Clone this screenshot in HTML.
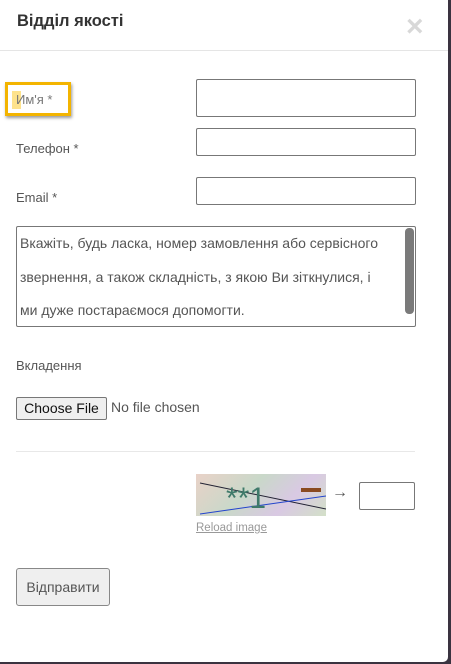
<!DOCTYPE html>
<html><head><meta charset="utf-8"><style>
html,body{margin:0;padding:0;width:451px;height:664px;overflow:hidden;background:#3a3340;font-family:"Liberation Sans","DejaVu Sans",sans-serif;}
.m{position:absolute;left:0;top:0;width:448px;height:662px;background:#fff;border-radius:0 0 5px 0;}
.t{position:absolute;left:17px;top:12px;font-size:16.5px;font-weight:bold;color:#333;}
.x{position:absolute;left:406px;top:9px;font-size:30px;color:#d8d8d8;font-weight:bold;line-height:36px;}
.hr1{position:absolute;left:0;top:50px;width:448px;height:1px;background:#e5e5e5;}
.l{position:absolute;left:16px;font-size:13px;color:#555;}
.in{position:absolute;left:196px;width:218px;border:1px solid #777;border-radius:2px;background:#fff;}
.hl{position:absolute;left:5px;top:82px;width:66px;height:34px;border:3px solid #f3b400;box-sizing:border-box;box-shadow:1px 2px 3px rgba(0,0,0,.4);}
.ta{position:absolute;left:16px;top:226px;width:398px;height:99px;border:1px solid #777;border-radius:2px;font-size:14px;color:#555;line-height:33.5px;}
.tx{padding:0 0 0 3px;width:385px;}
.sb{position:absolute;right:1px;top:1px;width:9px;height:86px;background:#7a7a7a;border-radius:4px;}
</style></head><body>
<div class="m">
<div class="t">Відділ якості</div>
<div class="x">×</div>
<div class="hr1"></div>
<div class="hl"></div>
<div style="position:absolute;left:12px;top:91px;width:9px;height:18px;background:#fde28c"></div>
<div class="l" style="top:92px;color:#777">Им'я *</div>
<div class="in" style="top:79px;height:36px"></div>
<div class="l" style="top:141px">Телефон *</div>
<div class="in" style="top:128px;height:26px"></div>
<div class="l" style="top:190px">Email *</div>
<div class="in" style="top:177px;height:26px"></div>
<div class="ta"><div class="tx">Вкажіть, будь ласка, номер замовлення або сервісного<br>звернення, а також складність, з якою Ви зіткнулися, і<br>ми дуже постараємося допомогти.</div><div class="sb"></div></div>
<div class="l" style="top:358px">Вкладення</div>
<div style="position:absolute;left:16px;top:397px;width:89px;height:21px;border:1px solid #777;border-radius:2px;background:#efefef;font-size:14px;color:#111;text-align:center;line-height:21px">Choose File</div>
<div style="position:absolute;left:111px;top:399px;font-size:14px;color:#555">No file chosen</div>
<div style="position:absolute;left:16px;top:451px;width:399px;height:1px;background:#e8e8e8"></div>
<div style="position:absolute;left:196px;top:474px;width:130px;height:42px;background:linear-gradient(135deg,#e9d2c8,#c9d8c9 40%,#d9c9e3 70%,#d3e0c8)">
<svg width="130" height="42"><line x1="4" y1="9" x2="130" y2="35" stroke="#223" /><line x1="4" y1="40" x2="130" y2="22" stroke="#24c"/><text x="30" y="34" font-size="30" fill="#3f7a6a" font-family="Liberation Sans">**1</text><rect x="105" y="14" width="20" height="4" fill="#8a4a20"/></svg></div>
<div style="position:absolute;left:332px;top:484px;font-size:16px;color:#555">→</div>
<div style="position:absolute;left:359px;top:482px;width:54px;height:26px;border:1px solid #777;border-radius:2px"></div>
<div style="position:absolute;left:196px;top:522px;font-size:11.5px;color:#999;text-decoration:underline">Reload image</div>
<div style="position:absolute;left:16px;top:568px;width:92px;height:36px;border:1px solid #888;border-radius:3px;background:#efefef;font-size:14px;color:#555;text-align:center;line-height:36px">Відправити</div>
</div>
</body></html>
